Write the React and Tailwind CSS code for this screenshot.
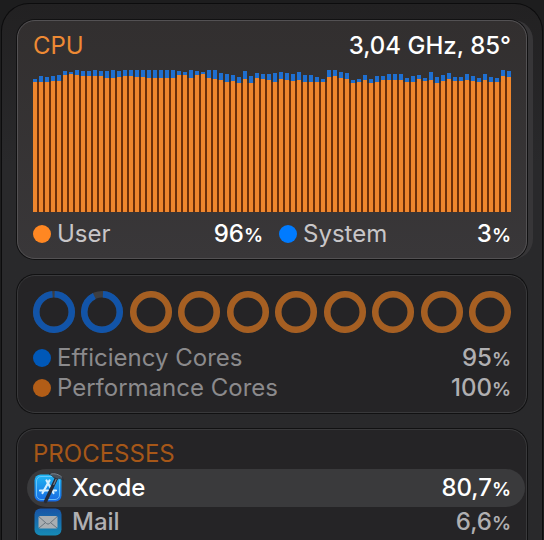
const CHART_BOTTOM = 212;

// [top of the system segment, top of the user segment]
const samples = [
  [79, 82], [76, 82], [77, 82], [76, 81], [75, 81], [71, 75], [72, 74], [70, 75], [71, 76], [71, 76],
  [70, 76], [71, 76], [71, 78], [70, 78], [71, 77], [70, 76], [70, 76], [70, 77], [70, 77], [70, 78],
  [70, 78], [70, 78], [70, 78], [70, 78], [71, 75], [72, 75], [70, 78], [71, 75], [72, 74], [70, 78],
  [70, 79], [73, 80], [74, 82], [75, 81], [77, 83], [71, 79], [76, 83], [73, 78], [74, 79], [74, 80],
  [73, 82], [72, 79], [73, 80], [74, 81], [72, 80], [75, 82], [75, 82], [77, 82], [79, 82], [70, 77],
  [70, 76], [72, 78], [73, 79], [80, 83], [79, 82], [75, 80], [79, 83], [76, 82], [76, 80], [74, 80],
  [74, 80], [74, 80], [78, 82], [76, 82], [75, 79], [78, 81], [72, 80], [77, 83], [75, 81], [73, 79],
  [77, 81], [77, 81], [74, 80], [76, 81], [78, 82], [74, 80], [77, 82], [78, 82], [70, 76], [71, 77],
];

const cores = [
  { kind: "e", load: 98 },
  { kind: "e", load: 92 },
  ...Array.from({ length: 8 }, () => ({ kind: "p", load: 100 })),
];

function Percent({ value, className = "" }) {
  return (
    <span className={`font-medium ${className}`}>
      {value}
      <span className="text-[19px] leading-none font-semibold">%</span>
    </span>
  );
}

function Dot({ className }) {
  return <span className={`mr-1.5 size-[18px] shrink-0 rounded-full ${className}`} />;
}

function UsageChart() {
  return (
    <svg
      role="img"
      aria-label="CPU usage history"
      viewBox="0 0 478 142"
      preserveAspectRatio="none"
      shapeRendering="crispEdges"
      className="block h-[142px] w-full"
    >
      {samples.map(([top, user], i) => (
        <g key={i}>
          {i < samples.length - 1 && (
            <rect x={i * 6 + 4} y={Math.max(user, samples[i + 1][1]) - 70} width="2" height={CHART_BOTTOM - Math.max(user, samples[i + 1][1])} fill="#6b2f0a" />
          )}
          <rect x={i * 6} y={top - 70} width="4" height={user - top} fill="#1f6fd0" />
          <rect x={i * 6} y={user - 70} width="4" height={CHART_BOTTOM - user} fill="#ee862d" />
        </g>
      ))}
    </svg>
  );
}

function CoreRing({ kind, load }) {
  return (
    <svg viewBox="0 0 42 42" className="size-[42px]" aria-hidden="true">
      <circle cx="21" cy="21" r="17.75" fill="none" stroke="#3e3e40" strokeWidth="6.5" />
      <circle
        cx="21"
        cy="21"
        r="17.75"
        fill="none"
        stroke={kind === "e" ? "#1254a8" : "#a65f22"}
        strokeWidth="6.5"
        pathLength="100"
        strokeDasharray={`${load} ${100 - load}`}
        transform={`rotate(${kind === "e" && load < 95 ? -87 : -88} 21 21)`}
      />
    </svg>
  );
}

function XcodeIcon() {
  return (
    <svg viewBox="0 0 30 32" className="-mr-0.5 h-8 w-[30px] shrink-0" aria-hidden="true">
      <defs>
        <linearGradient id="xcode" x1="0" y1="0" x2="0" y2="1">
          <stop offset="0" stopColor="#20b7f2" />
          <stop offset="1" stopColor="#1768e2" />
        </linearGradient>
      </defs>
      <rect x="0.5" y="2.5" width="27" height="27" rx="6" fill="url(#xcode)" />
      <rect x="2.5" y="4.5" width="23" height="23" rx="4.5" fill="none" stroke="#75cdfc" strokeWidth="0.8" />
      <g stroke="#d5efff" strokeWidth="2.2" strokeLinecap="round" fill="none">
        <path d="M12.5 8.5 19.5 21" />
        <path d="M15.5 8.5 8.5 21" />
        <path d="M6 18.5H14M18 18.5H22" />
      </g>
      <path d="M22.5 6 11.5 29.5" stroke="#252b37" strokeWidth="3.4" strokeLinecap="round" />
      <path d="M22.5 6.5 19.5 13" stroke="#77818c" strokeWidth="1.2" />
      <path d="M15 2C20 0 27 1.8 29.5 8.2 27 6.4 25 6.2 23.5 7L19.5 5.4C18 3.6 16.5 2.8 15 2Z" fill="#49525c" stroke="#222832" strokeWidth=".6" />
      <path d="M16.5 2.2C20.5 1 25 2.4 27.8 5.2" fill="none" stroke="#8b98a3" strokeWidth=".8" />
    </svg>
  );
}

function MailIcon() {
  return (
    <svg viewBox="0 0 28 28" className="size-7 shrink-0" aria-hidden="true">
      <defs>
        <linearGradient id="mail" x1="0" y1="0" x2="0" y2="1">
          <stop offset="0" stopColor="#1853a5" />
          <stop offset="1" stopColor="#168bb6" />
        </linearGradient>
      </defs>
      <rect x="0.5" y="0.5" width="27" height="27" rx="6" fill="url(#mail)" />
      <rect x="4.5" y="8" width="19" height="12.5" rx="1.5" fill="#a9aeb2" />
      <path d="M5 8.8 12.5 15.5Q14 16.8 15.5 15.5L23 8.8M5 20 11.5 14.6M23 20 16.5 14.6" fill="none" stroke="#69757f" strokeWidth="1" />
    </svg>
  );
}

export default function App() {
  return (
    <div className="flex h-screen flex-col overflow-hidden bg-[#1d1d1e] pt-[3px] font-['Inter',sans-serif] text-2xl leading-[30px]">
      <main className="mx-px flex min-h-0 flex-1 flex-col gap-4 rounded-t-[28px] border border-b-0 border-[#0c0c0d] bg-linear-to-b from-[#222122] to-[#29292b] to-30% px-[15px] pt-4">
        <div className="-mr-1.5 shrink-0 rounded-[20px] bg-[#373638] pr-1.5">
          <section className="flex flex-col rounded-[18px] border border-[#535153] bg-linear-to-b from-[#322f2f] to-[#393739] px-[15px] pt-[10px] pb-[9px] shadow-[0_0_0_1px_#111112]">
            <header className="flex items-center justify-between pb-[9px]">
              <h2 className="text-[#ee8a34]">CPU</h2>
              <span className="font-medium text-white">3,04 GHz, 85°</span>
            </header>
            <UsageChart />
            <div className="flex items-center pt-[7px]">
              <Dot className="bg-[#ff8722]" />
              <span className="flex-1 text-[#c8c6c8]">User</span>
              <Percent value="96" className="mr-4 text-white" />
              <div className="flex w-[232px] items-center">
                <Dot className="bg-[#007bff]" />
                <span className="flex-1 text-[#c8c6c8]">System</span>
                <Percent value="3" className="text-white" />
              </div>
            </div>
          </section>
        </div>

        <section className="shrink-0 rounded-[18px] border border-[#39393b] bg-[#252426] px-[15px] pt-[15px] pb-[9px] shadow-[0_0_0_1px_#111112]">
          <div className="flex justify-between pb-[10px]">
            {cores.map((core, i) => (
              <CoreRing key={i} {...core} />
            ))}
          </div>
          <div className="flex items-center">
            <Dot className="bg-[#0058b8]" />
            <span className="flex-1 text-[#8b8a8c]">Efficiency Cores</span>
            <Percent value="95" className="text-[#b0afb1]" />
          </div>
          <div className="flex items-center">
            <Dot className="bg-[#b25d17]" />
            <span className="flex-1 text-[#8b8a8c]">Performance Cores</span>
            <Percent value="100" className="text-[#b0afb1]" />
          </div>
        </section>

        <section className="min-h-0 flex-1 rounded-t-[18px] border border-b-0 border-[#39393b] bg-[#252426] pt-[9px] shadow-[0_0_0_1px_#111112]">
          <h2 className="px-[15px] text-[#a65718]">PROCESSES</h2>
          <ul>
            <li className="mr-px ml-[9px] flex h-[38px] items-center gap-2.5 rounded-full bg-[#3a3a3c] pr-3.5 pl-[7px] font-medium text-white">
              <XcodeIcon />
              <span className="flex-1">Xcode</span>
              <Percent value="80,7" />
            </li>
            <li className="mr-px ml-[9px] flex h-[30px] items-center gap-2.5 pr-3.5 pl-[7px] font-medium text-[#b0afb1]">
              <MailIcon />
              <span className="flex-1">Mail</span>
              <Percent value="6,6" />
            </li>
          </ul>
        </section>
      </main>
    </div>
  );
}
